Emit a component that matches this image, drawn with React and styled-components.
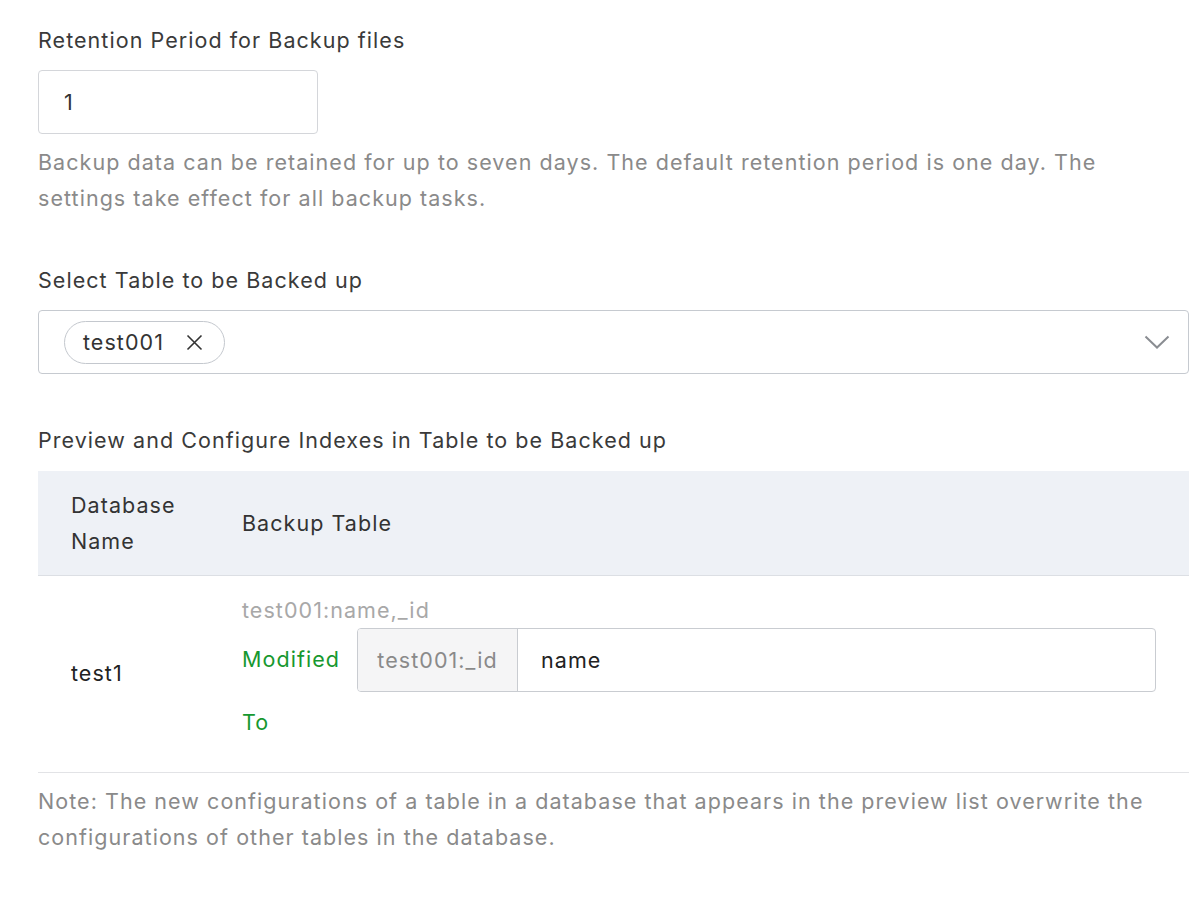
import React from 'react';
import styled, { createGlobalStyle } from 'styled-components';

const GlobalStyle = createGlobalStyle`
  body {
    margin: 0;
    background: #fff;
    font-family: Inter, "Noto Sans", "Liberation Sans", sans-serif;
    font-size: 21.5px;
    letter-spacing: 1.05px;
    color: #333;
  }
`;

const Page = styled.div`
  width: 1151px;
  padding: 22px 0 40px 38px;
`;

const Label = styled.div`
  line-height: 36px;
  color: #3a3a3a;
  margin-top: ${p => p.top || 0}px;
`;

const Help = styled.div`
  line-height: 36px;
  color: #8a8a8a;
  margin-top: ${p => p.top || 0}px;
`;

const NumberBox = styled.div`
  box-sizing: border-box;
  width: 280px;
  height: 64px;
  margin-top: 12px;
  border: 1.5px solid #d4d6da;
  border-radius: 4px;
  display: flex;
  align-items: center;
  padding-left: 25px;
  color: #333;
`;

const Select = styled.div`
  box-sizing: border-box;
  height: 64px;
  margin-top: 12px;
  border: 1.5px solid #c6cad0;
  border-radius: 4px;
  display: flex;
  align-items: center;
  justify-content: space-between;
  padding: 0 18px 0 25px;
`;

const Tag = styled.span`
  box-sizing: border-box;
  height: 43px;
  display: inline-flex;
  align-items: center;
  gap: 22px;
  padding: 0 21px 0 18px;
  border: 1.5px solid #c4c8ce;
  border-radius: 22px;
  color: #333;
`;

const Table = styled.div`
  margin-top: 13px;
`;

const HeadRow = styled.div`
  display: flex;
  background: #eef1f6;
  border-bottom: 1.5px solid #dcdfe4;
  padding: 16px 0 16px;
`;

const Row = styled.div`
  display: flex;
  border-bottom: 1.5px solid #e2e3e6;
  padding: 16px 33px 18px 0;
`;

const NameCell = styled.div`
  width: 171px;
  padding-left: 33px;
  line-height: 36px;
  display: flex;
  align-items: center;
  color: ${p => (p.head ? '#333' : '#222')};
`;

const TableCell = styled.div`
  flex: 1;
  line-height: 36px;
  display: flex;
  flex-direction: ${p => (p.head ? 'row' : 'column')};
  align-items: ${p => (p.head ? 'center' : 'stretch')};
`;

const Hint = styled.div`
  color: #a8a8a8;
`;

const Mapping = styled.div`
  display: flex;
  align-items: flex-start;
`;

const Green = styled.div`
  width: 115px;
  line-height: 63px;
  color: #17982f;
`;

const InputGroup = styled.div`
  flex: 1;
  box-sizing: border-box;
  height: 64px;
  display: flex;
  border: 1.5px solid #c9ccd1;
  border-radius: 4px;
  overflow: hidden;
`;

const Addon = styled.div`
  width: 159px;
  background: #f5f5f6;
  border-right: 1.5px solid #c9ccd1;
  color: #8a8a8a;
  display: flex;
  align-items: center;
  justify-content: center;
`;

const Field = styled.div`
  flex: 1;
  display: flex;
  align-items: center;
  padding-left: 23px;
  color: #222;
`;

const Close = () => (
  <svg width="17" height="17" viewBox="0 0 17 17" fill="none" stroke="#333" strokeWidth="1.6">
    <path d="M1.5 1.5l14 14M15.5 1.5l-14 14" />
  </svg>
);

const Chevron = () => (
  <svg width="26" height="14" viewBox="0 0 26 14" fill="none" stroke="#8a8d92" strokeWidth="2">
    <path d="M1.5 1.5l11.5 11 11.5-11" />
  </svg>
);

export default function App() {
  return (
    <Page>
      <GlobalStyle />
      <Label>Retention Period for Backup files</Label>
      <NumberBox>1</NumberBox>
      <Help top={10}>
        Backup data can be retained for up to seven days. The default retention period is one day. The
        settings take effect for all backup tasks.
      </Help>

      <Label top={46}>Select Table to be Backed up</Label>
      <Select>
        <Tag>
          test001
          <Close />
        </Tag>
        <Chevron />
      </Select>

      <Label top={48}>Preview and Configure Indexes in Table to be Backed up</Label>
      <Table>
        <HeadRow>
          <NameCell head>
            Database
            <br />
            Name
          </NameCell>
          <TableCell head>Backup Table</TableCell>
        </HeadRow>
        <Row>
          <NameCell>test1</NameCell>
          <TableCell>
            <Hint>test001:name,_id</Hint>
            <Mapping>
              <Green>
                Modified
                <br />
                To
              </Green>
              <InputGroup>
                <Addon>test001:_id</Addon>
                <Field>name</Field>
              </InputGroup>
            </Mapping>
          </TableCell>
        </Row>
      </Table>

      <Help top={10}>
        Note: The new configurations of a table in a database that appears in the preview list overwrite the
        configurations of other tables in the database.
      </Help>
    </Page>
  );
}
